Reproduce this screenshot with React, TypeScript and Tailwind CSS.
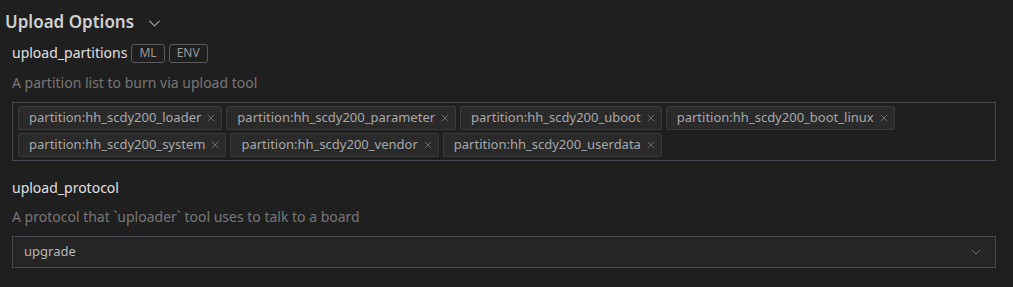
import { ChevronDown, X } from 'lucide-react';

const PARTITIONS = [
  'partition:hh_scdy200_loader',
  'partition:hh_scdy200_parameter',
  'partition:hh_scdy200_uboot',
  'partition:hh_scdy200_boot_linux',
  'partition:hh_scdy200_system',
  'partition:hh_scdy200_vendor',
  'partition:hh_scdy200_userdata',
];

function Badge({ text }: { text: string }) {
  return (
    <span className="ml-[4px] inline-flex h-[19px] items-center rounded-[3px] border border-[#5a5a5a] px-[7px] text-[12px] text-[#9a9a9a]">
      {text}
    </span>
  );
}

function Tag({ text }: { text: string }) {
  return (
    <div className="flex h-[24px] items-center rounded-[2px] border border-[#3a3a3a] bg-[#2a2a2a] pl-[10px] pr-[4px] text-[13px] text-[#a8a8a8]">
      <span>{text}</span>
      <X size={12} strokeWidth={1.4} className="ml-[4px] text-[#8a8a8a]" />
    </div>
  );
}

export default function App() {
  return (
    <div
      className="h-[287px] w-[1013px] bg-[#1f1f1f] text-[#cccccc]"
      style={{ fontFamily: '"Noto Sans", "Open Sans", sans-serif' }}
    >
      <div className="flex items-center pl-[5px] pt-[9px]">
        <span className="text-[17px] font-semibold leading-[26px] text-[#d0d0d0]">Upload Options</span>
        <ChevronDown size={19} strokeWidth={1.3} className="ml-[11px] mt-[3px] text-[#aaaaaa]" />
      </div>

      <div className="pl-[12px] pr-[17px]">
        <div className="mt-[8px] flex items-center">
          <span className="text-[14px] leading-[20px] text-[#e0e0e0]">upload_partitions</span>
          <Badge text="ML" />
          <Badge text="ENV" />
        </div>
        <div className="mt-[10px] text-[14px] leading-[20px] text-[#777777]">
          A partition list to burn via upload tool
        </div>
        <div className="mt-[9px] flex flex-wrap gap-x-[4px] gap-y-[3px] border border-[#454a51] px-[5px] py-[3px]">
          {PARTITIONS.map((p) => (
            <Tag key={p} text={p} />
          ))}
        </div>

        <div className="mt-[17px] text-[14px] leading-[20px] text-[#e0e0e0]">upload_protocol</div>
        <div className="mt-[9px] text-[14px] leading-[20px] text-[#777777]">
          A protocol that `uploader` tool uses to talk to a board
        </div>
        <div className="mt-[9px] flex h-[32px] items-center justify-between border border-[#454a51] bg-[#252525] pl-[11px] pr-[11px]">
          <span className="text-[13px] text-[#b8b8b8]">upgrade</span>
          <ChevronDown size={16} strokeWidth={1.3} className="text-[#777777]" />
        </div>
      </div>
    </div>
  );
}
